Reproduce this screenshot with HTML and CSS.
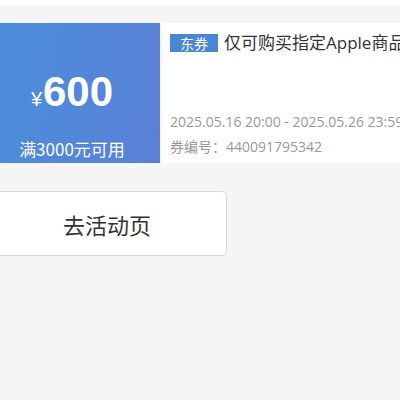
FILE: index.html
```html
<!DOCTYPE html>
<html lang="zh-CN">
<head>
    <meta charset="UTF-8">
    <meta name="viewport" content="width=device-width, initial-scale=1.0">
    <title>优惠券</title>
    <link rel="stylesheet" href="styles.css">
</head>
<body>
    <div class="topbar"></div>

    <div class="coupon">
        <div class="coupon-value">
            <div class="amount"><span class="yen">¥</span>600</div>
            <div class="limit">满3000元可用</div>
        </div>
        <div class="coupon-info">
            <div class="coupon-title">
                <span class="tag">东券</span>
                <span class="name">仅可购买指定Apple商品</span>
            </div>
            <div class="coupon-meta">
                <p>2025.05.16 20:00 - 2025.05.26 23:59</p>
                <p>券编号：440091795342</p>
            </div>
        </div>
    </div>

    <div class="actions">
        <button class="go-btn">去活动页</button>
    </div>
</body>
</html>
```

FILE: styles.css
```css
* {
    margin: 0;
    padding: 0;
    box-sizing: border-box;
}

body {
    background-color: #f5f5f5;
    font-family: "Open Sans", "Noto Sans CJK SC", sans-serif;
    color: #333;
    overflow: hidden;
    width: 400px;
    height: 400px;
}

.topbar {
    height: 7px;
    background: #fff;
    border-bottom: 1px solid #eee;
}

.coupon {
    display: flex;
    margin: 16px 0 0 -16px;
    height: 140px;
    width: 640px;
}

.coupon-value {
    width: 176px;
    flex-shrink: 0;
    background: linear-gradient(100deg, #4a8fda 0%, #5a80d8 100%);
    color: #fff;
    display: flex;
    flex-direction: column;
    align-items: center;
}

.amount {
    margin-top: 44px;
    font-family: "Liberation Sans", Arial, sans-serif;
    font-weight: bold;
    font-size: 42px;
    line-height: 50px;
}

.yen {
    font-size: 20px;
    font-weight: normal;
    margin-right: 1px;
}

.limit {
    margin-top: 14px;
    font-size: 17px;
    line-height: 22px;
    font-family: "Noto Sans CJK SC", sans-serif;
}

.coupon-info {
    flex: 1;
    margin-left: 2px;
    background: #fff;
    padding: 10px 8px 4px;
    display: flex;
    flex-direction: column;
    justify-content: space-between;
}

.coupon-title {
    display: flex;
    align-items: center;
    gap: 6px;
    white-space: nowrap;
}

.tag {
    background: #4a86d6;
    color: #fff;
    font-size: 14px;
    line-height: 18px;
    padding: 0 10px;
    font-family: "Noto Sans CJK SC", sans-serif;
}

.name {
    font-size: 17px;
    line-height: 20px;
    color: #333;
}

.coupon-meta {
    font-size: 14px;
    color: #999;
    line-height: 25px;
    white-space: nowrap;
}

.actions {
    margin: 28px 0 0 -13px;
}

.go-btn {
    width: 240px;
    height: 65px;
    background: #fff;
    border: 1px solid #d9d9d9;
    border-radius: 5px;
    font-size: 22px;
    color: #333;
    font-family: "Noto Sans CJK SC", sans-serif;
}
```
